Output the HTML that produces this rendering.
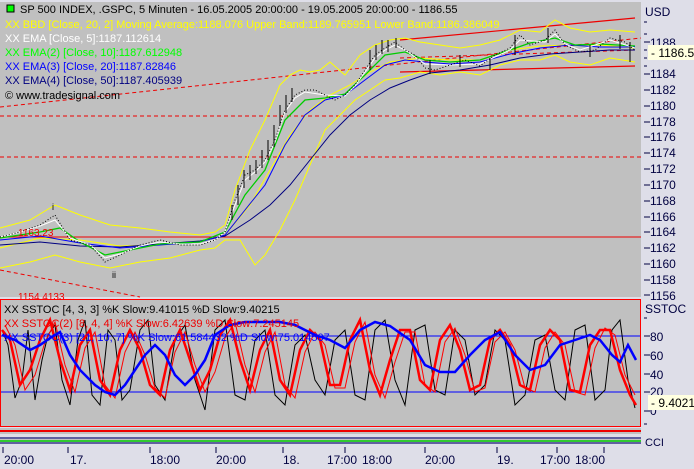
<!DOCTYPE html>
<html><head><meta charset="utf-8"><style>
body{margin:0;width:694px;height:469px;overflow:hidden;background:#dedee8;font-family:"Liberation Sans",sans-serif;}
svg{display:block}
</style></head><body>
<svg width="694" height="469" xmlns="http://www.w3.org/2000/svg" font-family="Liberation Sans, sans-serif">
<rect x="0" y="0" width="694" height="469" fill="#dedee8"/>
<rect x="0" y="2" width="641" height="295" fill="#c0c0c0"/>
<!-- horizontal lines -->
<line x1="0" y1="116" x2="641" y2="116" stroke="#e00" stroke-dasharray="4,3"/>
<line x1="0" y1="157" x2="641" y2="157" stroke="#e00" stroke-dasharray="4,3"/>
<line x1="0" y1="237" x2="641" y2="237" stroke="#e00"/>
<line x1="0" y1="107" x2="641" y2="38" stroke="#e00" stroke-dasharray="4,3"/>
<line x1="0" y1="270" x2="140" y2="297" stroke="#e00" stroke-dasharray="4,3"/>
<line x1="400" y1="40" x2="635" y2="18" stroke="#e00" stroke-width="1.2"/>
<line x1="400" y1="72" x2="635" y2="66" stroke="#e00" stroke-width="1.2"/>
<line x1="400" y1="58" x2="635" y2="50" stroke="#e00" stroke-dasharray="4,3"/>
<!-- bollinger -->
<polyline fill="none" stroke="#ff0" points="0,228 30,220 55,205 80,215 110,225 140,228 170,232 200,235 215,232 225,225 235,190 250,150 265,120 280,85 290,75 300,70 310,72 320,70 330,62 345,75 360,55 375,45 390,40 405,38 420,42 440,45 460,48 480,45 500,40 520,30 540,32 555,20 570,28 590,32 610,30 635,32"/>
<polyline fill="none" stroke="#ff0" points="0,268 30,262 55,255 80,262 110,268 140,262 170,258 200,250 215,248 225,240 240,240 255,265 265,255 280,230 295,200 310,165 325,130 340,115 355,100 370,90 385,80 400,78 420,72 440,75 460,72 480,75 500,65 520,60 540,60 555,55 570,62 590,65 610,58 635,62"/>
<polyline fill="none" stroke="#ff0" points="0,248 40,238 80,240 120,246 160,245 200,242 225,235 250,205 270,170 290,135 310,110 330,95 350,85 370,72 390,62 420,58 450,60 480,60 510,50 540,46 570,45 600,45 635,48"/>
<!-- EMA50 -->
<polyline fill="none" stroke="#000080" points="0,245 40,242 80,246 120,247 160,244 200,241 225,236 250,220 270,205 290,185 310,160 330,135 350,115 370,100 390,88 410,80 430,73 460,70 490,65 520,58 550,54 580,52 610,50 635,50"/>
<!-- EMA20 -->
<polyline fill="none" stroke="#00f" points="0,240 40,236 80,243 120,248 160,245 200,242 225,235 245,210 265,185 285,145 305,115 325,100 345,95 365,80 385,65 405,60 425,62 450,64 480,62 510,54 540,48 570,45 600,47 635,47"/>
<!-- EMA10 -->
<polyline fill="none" stroke="#0c0" stroke-width="1.3" points="0,238 40,232 60,228 80,242 105,255 130,250 160,244 200,242 225,232 245,195 265,170 285,120 305,100 325,98 345,94 365,75 385,55 405,52 425,60 450,62 480,60 510,50 530,43 555,38 575,45 600,44 635,46"/>
<!-- EMA5 -->
<polyline fill="none" stroke="#fff" points="0,237 20,232 40,226 55,220 70,238 90,245 105,258 120,254 140,246 160,242 180,244 200,244 215,240 225,232 235,205 245,180 255,172 265,162 275,142 285,112 295,98 305,92 325,95 345,96 355,86 365,72 375,58 385,50 395,45 405,50 425,64 450,65 480,64 510,50 520,40 545,42 555,34 565,44 580,50 610,40 635,48"/>
<!-- price bars -->
<polyline fill="none" stroke="#000" stroke-width="1" stroke-dasharray="1,2" points="0,237 20,232 40,225 55,215 70,240 90,245 105,262 120,255 140,245 160,240 180,245 200,245 215,240 225,232 235,200 245,175 255,170 265,160 275,140 285,110 295,95 305,90 315,90 325,95 335,100 345,95 355,85 365,70 375,55 385,48 395,42 405,50 415,55 425,68 435,70 450,65 465,60 480,66 495,55 510,48 520,35 530,45 545,40 555,30 565,45 580,52 595,50 610,38 625,42 635,50"/>
<g stroke="#000">
<path d="M232 205v15M238 185v20M244 170v18M250 165v15M256 160v14M262 150v18M268 140v20M274 125v22M280 105v20M286 95v18M292 88v14M370 50v20M376 45v15M382 40v14M388 40v12M396 38v10M430 60v14M460 55v12M490 58v12M515 35v20M548 28v15M590 45v12M620 35v14M630 42v20"/>
</g>
<text x="18" y="236" fill="#e00" font-size="10">1163.23</text>
<text x="52" y="210" fill="#000" font-size="9">i</text>
<text x="112" y="278" fill="#000" font-size="9">ii</text>
<text x="18" y="300" fill="#e00" font-size="10">1154.4133</text>
<!-- legend -->
<rect x="7" y="5" width="7" height="7" fill="#0f0" stroke="#000"/>
<text x="20" y="13" font-size="11" fill="#000">SP 500 INDEX, .GSPC, 5 Minuten - 16.05.2005 20:00:00 - 19.05.2005 20:00:00 - 1186.55</text>
<g font-size="11">
<text x="5" y="28" fill="#ff0">XX BBD [Close, 20, 2] Moving Average:1188.076 Upper Band:1189.765951 Lower Band:1186.386049</text>
<text x="5" y="42" fill="#fff">XX EMA [Close, 5]:1187.112614</text>
<text x="5" y="56" fill="#0f0">XX EMA(2) [Close, 10]:1187.612948</text>
<text x="5" y="70" fill="#00f">XX EMA(3) [Close, 20]:1187.82846</text>
<text x="5" y="84" fill="#000080">XX EMA(4) [Close, 50]:1187.405939</text>
<text x="5" y="99" fill="#000">© www.tradesignal.com</text>
</g>
<!-- price axis -->
<g font-size="12" fill="#000040">
<text x="645" y="16">USD</text>
<text x="650" y="47">1188</text><text x="650" y="78">1184</text><text x="650" y="94">1182</text><text x="650" y="110">1180</text><text x="650" y="126">1178</text><text x="650" y="141">1176</text><text x="650" y="157">1174</text><text x="650" y="173">1172</text><text x="650" y="189">1170</text><text x="650" y="205">1168</text><text x="650" y="221">1166</text><text x="650" y="236">1164</text><text x="650" y="252">1162</text><text x="650" y="268">1160</text><text x="650" y="284">1158</text><text x="650" y="300">1156</text>
</g>
<path d="M644 22h3M644 34h3M644 42h6M644 50h3M644 58h3M644 66h3M644 74h6M644 90h6M644 106h6M644 122h6M644 137h6M644 153h6M644 169h6M644 185h6M644 201h6M644 217h6M644 232h6M644 248h6M644 264h6M644 280h6M644 295h6" stroke="#000040"/>
<rect x="648" y="45" width="46" height="15" fill="#ffffe0"/>
<text x="651" y="57" font-size="12" fill="#000">- 1186.55</text>
<!-- stoch panel -->
<rect x="0.5" y="299.5" width="640" height="127" fill="#c0c0c0" stroke="#f00"/>
<line x1="1" y1="336" x2="640" y2="336" stroke="#00f"/>
<line x1="1" y1="392" x2="640" y2="392" stroke="#00f"/>
<polyline fill="none" stroke="#000" points="2,330 8,345 15,398 22,380 28,330 35,400 42,360 48,335 55,325 62,380 70,405 78,340 85,320 92,395 100,405 108,330 115,340 122,400 130,390 140,330 148,320 155,385 165,400 175,340 185,325 195,380 205,410 215,330 225,320 235,395 245,400 255,340 265,330 275,395 285,405 295,345 305,335 315,380 325,395 335,340 345,330 355,395 365,400 375,330 385,320 395,380 405,405 415,330 425,325 435,390 445,395 455,330 465,340 475,395 485,385 495,330 505,340 515,405 525,395 535,340 545,335 555,390 565,400 575,330 585,325 595,400 605,390 612,330 620,320 628,380 635,408"/>
<polyline fill="none" stroke="#f00" stroke-width="2.5" points="2,330 10,340 20,385 30,370 40,340 50,320 60,360 70,390 80,345 90,330 100,380 110,395 120,350 130,330 140,350 150,385 160,395 170,350 180,330 190,360 200,390 210,370 220,335 230,320 240,360 250,390 260,350 270,330 280,380 290,395 300,350 310,330 320,340 330,385 340,385 350,340 360,320 370,370 380,395 390,360 400,330 410,330 420,380 430,390 440,340 450,325 460,350 470,390 480,385 490,340 500,330 510,345 520,385 530,390 540,345 550,330 560,340 570,390 580,392 590,345 600,330 610,330 620,370 630,395 636,405"/>
<polyline fill="none" stroke="#f00" points="5,325 15,345 25,390 35,375 45,342 55,322 65,365 75,392 85,348 95,332 105,385 115,398 125,352 135,332 145,355 155,388 165,398 175,352 185,332 195,365 205,392 215,372 225,338 235,322 245,365 255,392 265,352 275,332 285,385 295,398 305,352 315,332 325,345 335,388 345,388 355,342 365,322 375,375 385,398 395,362 405,332 415,332 425,385 435,392 445,342 455,328 465,355 475,392 485,388 495,342 505,332 515,350 525,388 535,392 545,348 555,332 565,345 575,392 585,395 595,348 605,328 615,335 625,375 635,395"/>
<polyline fill="none" stroke="#00f" stroke-width="2.5" points="2,335 15,340 30,350 40,345 50,338 60,332 70,355 80,370 95,385 105,392 115,395 125,385 135,370 145,355 155,345 165,355 175,375 185,385 195,375 205,360 215,335 230,325 245,322 260,322 280,322 295,325 305,330 315,335 330,340 345,348 360,330 375,322 390,326 410,340 425,365 440,372 455,372 470,355 485,340 500,332 515,355 530,370 545,365 560,345 575,340 590,335 600,340 612,355 620,362 628,345 636,360"/>
<g font-size="11">
<text x="4" y="313" fill="#000">XX SSTOC [4, 3, 3] %K Slow:9.41015 %D Slow:9.40215</text>
<text x="4" y="327" fill="#e00">XX SSTOC(2) [8, 4, 4] %K Slow:6.42639 %D Slow:7.245145</text>
<text x="4" y="341" fill="#00f">XX SSTOC(3) [21, 10, 7] %K Slow:61.584432 %D Slow:75.014507</text>
</g>
<g font-size="12" fill="#000040">
<text x="645" y="313">SSTOC</text>
<text x="650" y="341">80</text><text x="650" y="360">60</text><text x="650" y="379">40</text><text x="650" y="396">20</text><text x="650" y="415">0</text>
</g>
<path d="M644 318h3M644 336h6M644 355h6M644 374h6M644 392h6M644 411h6M644 424h3" stroke="#000040"/>
<rect x="648" y="395" width="46" height="15" fill="#ffffe0"/>
<text x="651" y="407" font-size="12" fill="#000">- 9.4021</text>
<!-- small panels -->
<rect x="0" y="428" width="641" height="6" fill="#c0c0c0"/>
<line x1="0" y1="431" x2="641" y2="431" stroke="#e00" stroke-width="2"/>
<rect x="0" y="437" width="641" height="7" fill="#c0c0c0"/>
<line x1="0" y1="438" x2="641" y2="438" stroke="#000080"/>
<line x1="0" y1="441" x2="641" y2="441" stroke="#0c0" stroke-width="1.5"/>
<line x1="0" y1="443" x2="641" y2="443" stroke="#000080"/>
<text x="645" y="446" font-size="11" fill="#000040">CCI</text>
<!-- time axis -->
<path d="M3 447v6M68 447v6M150 447v6M216 447v6M283 447v6M345 447v6M425 447v6M497 447v6M557 447v6M604 447v6" stroke="#000040"/>
<g font-size="12" fill="#000040">
<text x="4" y="464">20:00</text><text x="70" y="464">17.</text><text x="150" y="464">18:00</text><text x="216" y="464">20:00</text><text x="283" y="464">18.</text><text x="327" y="464">17:00</text><text x="362" y="464">18:00</text><text x="425" y="464">20:00</text><text x="497" y="464">19.</text><text x="540" y="464">17:00</text><text x="575" y="464">18:00</text>
</g>
</svg>
</body></html>
